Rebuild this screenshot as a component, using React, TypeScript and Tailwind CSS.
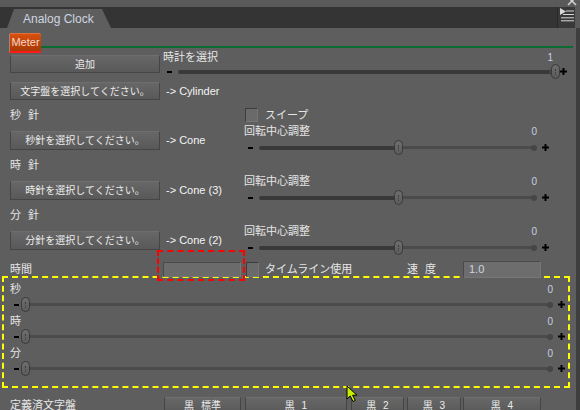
import React from "react";

const Btn = ({ children, className = "" }: { children: React.ReactNode; className?: string }) => (
  <button
    type="button"
    className={`flex items-center justify-center border border-[#454545] border-t-[#6e6e6e] bg-gradient-to-b from-[#676767] to-[#595959] text-[10px] text-[#ececec] [word-spacing:4px] ${className}`}
  >
    {children}
  </button>
);

const Check = ({ className = "" }: { className?: string }) => (
  <span
    className={`block h-[14px] w-[13px] border border-l-[#3c3c3c] border-t-[#3c3c3c] border-r-[#767676] border-b-[#767676] bg-[#6a6a6a] ${className}`}
  />
);

const Plus = () => (
  <svg width="7" height="7" viewBox="0 0 7 7" className="ml-[5px] shrink-0">
    <rect x="0" y="2.5" width="7" height="2" fill="#000" />
    <rect x="2.5" y="0" width="2" height="7" fill="#000" />
  </svg>
);

// pos = thumb place in percent (0..100)
const Slider = ({ pos, className = "" }: { pos: number; className?: string }) => (
  <div className={`flex h-[15px] items-center ${className}`}>
    <span className="h-[2px] w-[5px] shrink-0 bg-black" />
    <div className="relative ml-[6px] flex h-[15px] flex-1 items-center">
      <div className="h-[4px] rounded-l-full bg-[#393939]" style={{ width: `${pos}%` }} />
      <div className="h-[3px] flex-1 bg-[#4b4b4b]" />
      <span className="-ml-[3px] h-[6px] w-[6px] rounded-full bg-[#464646]" />
      <span
        className="absolute top-0 flex h-[15px] w-[9px] justify-center rounded-full border border-[#3a3a3a] bg-gradient-to-b from-[#6e6e6e] to-[#5c5c5c]"
        style={{ left: `calc(${pos}% - 4.5px)` }}
      >
        <span className="mt-[4px] h-[6px] border-l border-dotted border-[#3c3c3c]" />
      </span>
    </div>
    <Plus />
  </div>
);

const Hand = ({ label, btn, target, sweep }: { label: string; btn: string; target: string; sweep?: boolean }) => (
  <div className="flex h-[50px]">
    <div className="w-[244px] pl-[10px]">
      <div className="h-[16px] text-[11px] leading-[16px] [word-spacing:4px]">{label}</div>
      <div className="mt-[8px] flex items-center">
        <Btn className="h-[19px] w-[150px]">{btn}</Btn>
        <span className="ml-[6px] text-[11px] text-[#f4f4f4]">{target}</span>
      </div>
    </div>
    <div className="w-[305px]">
      <div className="flex h-[16px] items-center pl-[1px]">
        {sweep && (
          <>
            <Check />
            <span className="ml-[7px] text-[11px]">スイープ</span>
          </>
        )}
      </div>
      <div className="mt-[1px] flex h-[14px] items-center justify-between pr-[12px] text-[11px]">
        <span>回転中心調整</span>
        <span className="text-[10px] text-[#c5d0e2]">0</span>
      </div>
      <Slider pos={50} className="mt-[2px] pl-[4px]" />
    </div>
  </div>
);

const Group = ({ label }: { label: string }) => (
  <div className="h-[32px]">
    <div className="flex h-[16px] items-center justify-between pl-[6px] pr-[15px] text-[11px]">
      <span>{label}</span>
      <span className="text-[10px] text-[#c5d0e2]">0</span>
    </div>
    <Slider pos={0} className="pl-[10px] pr-[3px]" />
  </div>
);

export default function App() {
  return (
    <div className="relative h-[410px] w-[580px] overflow-hidden bg-[#5e5e5e] font-['Liberation_Sans','Noto_Sans_CJK_JP',sans-serif] text-[#e6e6e6]">
      {/* window top strip */}
      <div className="h-[7px] bg-[#5a5a5a]" />

      {/* title tab bar */}
      <div className="flex h-[21px] items-end bg-[#343434]">
        <div className="ml-[7px] flex h-[19px] w-[104px] items-center bg-[#5e5e5e] pl-[16px] text-[12px] text-[#cdd5e0] [clip-path:polygon(7px_0,95px_0,104px_100%,0_100%)]">
          Analog Clock
        </div>
        <div className="flex-1" />
        <div className="flex h-[21px] w-[18px] items-start justify-center border-l border-[#282828] bg-[#393939] pt-[1px]">
          <svg width="14" height="14" viewBox="0 0 14 14">
            <polygon points="0,0 0,7 6,3.5" fill="#d6d6d6" />
            <rect x="6" y="2.5" width="8" height="1" fill="#d6d6d6" />
            <rect x="3" y="6" width="11" height="1" fill="#d6d6d6" />
            <rect x="1" y="9.3" width="13" height="1" fill="#d6d6d6" />
            <rect x="1" y="12.3" width="13" height="1" fill="#d6d6d6" />
          </svg>
        </div>
        <div className="h-[21px] w-[5px] bg-[#5a5a5a]" />
      </div>

      {/* panel */}
      <div className="h-[382px] w-[580px] border-r-4 border-[#3e3e3e]">
        {/* Meter tab */}
        <div className="flex h-[23px] items-start">
          <div className="ml-[9px] mt-[5px] flex h-[20px] w-[32px] items-center justify-center rounded-t-[2px] border-b-2 border-l border-t border-b-[#ff1a1a] border-l-[#b08070] border-t-[#e07040] bg-gradient-to-b from-[#d8500e] to-[#a83a05] text-[11px] text-[#f6d8cc]">
            Meter
          </div>
          <div className="mr-[3px] mt-[18px] h-[2px] flex-1 bg-[#0c6b30]" />
        </div>

        {/* clock select */}
        <div className="flex h-[28px]">
          <Btn className="ml-[10px] mt-[4px] h-[18px] w-[150px]">追加</Btn>
          <div className="ml-[3px] w-[404px]">
            <div className="flex h-[12px] items-center justify-between pr-[14px] text-[11px]">
              <span>時計を選択</span>
              <span className="text-[10px] text-[#c5d0e2]">1</span>
            </div>
            <Slider pos={100} className="mt-[1px] pl-[4px]" />
          </div>
        </div>

        <div className="mt-[3px] flex h-[18px] items-center pl-[10px]">
          <Btn className="h-[18px] w-[150px]">文字盤を選択してください。</Btn>
          <span className="ml-[6px] text-[11px] text-[#f4f4f4]">-&gt; Cylinder</span>
        </div>

        <div className="mt-[7px]">
          <Hand label="秒 針" btn="秒針を選択してください。" target="-> Cone" sweep />
          <Hand label="時 針" btn="時針を選択してください。" target="-> Cone (3)" />
          <Hand label="分 針" btn="分針を選択してください。" target="-> Cone (2)" />
        </div>

        {/* time row */}
        <div className="mt-[2px] flex h-[20px] items-center pl-[10px] text-[11px]">
          <span className="w-[153px]">時間</span>
          <span className="block h-[15px] w-[78px] border border-l-[#4a4a4a] border-t-[#4a4a4a] border-r-[#777] border-b-[#777] bg-[#6b6b6b]" />
          <Check className="ml-[5px] h-[15px]" />
          <span className="ml-[6px] w-[142px]">タイムライン使用</span>
          <span className="w-[56px] [word-spacing:4px]">速 度</span>
          <span className="flex h-[17px] w-[78px] items-center border border-l-[#4a4a4a] border-t-[#4a4a4a] border-r-[#777] border-b-[#777] bg-[#6d6d6d] pl-[5px] text-[11px] text-[#cdd5e0]">
            1.0
          </span>
        </div>

        {/* highlighted sliders */}
        <div className="-mt-[3px] ml-[2px] h-[112px] w-[568px] border-2 border-dashed border-[#ffff00] pt-[3px]">
          <Group label="秒" />
          <Group label="時" />
          <Group label="分" />
        </div>

        {/* presets */}
        <div className="mt-[9px] flex items-start text-[11px]">
          <span className="mt-[2px] w-[164px] pl-[10px] leading-[12px]">定義済文字盤</span>
          <Btn className="h-[17px] w-[77px]">黒 標準</Btn>
          <Btn className="ml-[4px] h-[17px] w-[102px]">黒 1</Btn>
          <Btn className="ml-[4px] h-[17px] w-[53px]">黒 2</Btn>
          <Btn className="ml-[3px] h-[17px] w-[54px]">黒 3</Btn>
          <Btn className="ml-[2px] h-[17px] w-[78px]">黒 4</Btn>
        </div>
      </div>

      {/* close glyph */}
      <svg width="10" height="10" viewBox="0 0 10 10" className="absolute left-[567px] top-[-4px]">
        <path d="M1 1 L9 9 M9 1 L1 9" stroke="#d0d0d0" strokeWidth="1.6" />
      </svg>

      {/* red annotation */}
      <div className="absolute left-[157px] top-[250px] h-[31px] w-[88px] border-2 border-dashed border-[#ff0000]" />

      {/* mouse cursor */}
      <svg width="13" height="18" viewBox="0 0 13 18" className="absolute left-[346px] top-[385px]">
        <path d="M1 1 L1 14 L4.2 11 L7 16.5 L9.3 15.4 L6.6 10.2 L11 10.2 Z" fill="#c6ee00" stroke="#000" strokeWidth="1" />
      </svg>
    </div>
  );
}
